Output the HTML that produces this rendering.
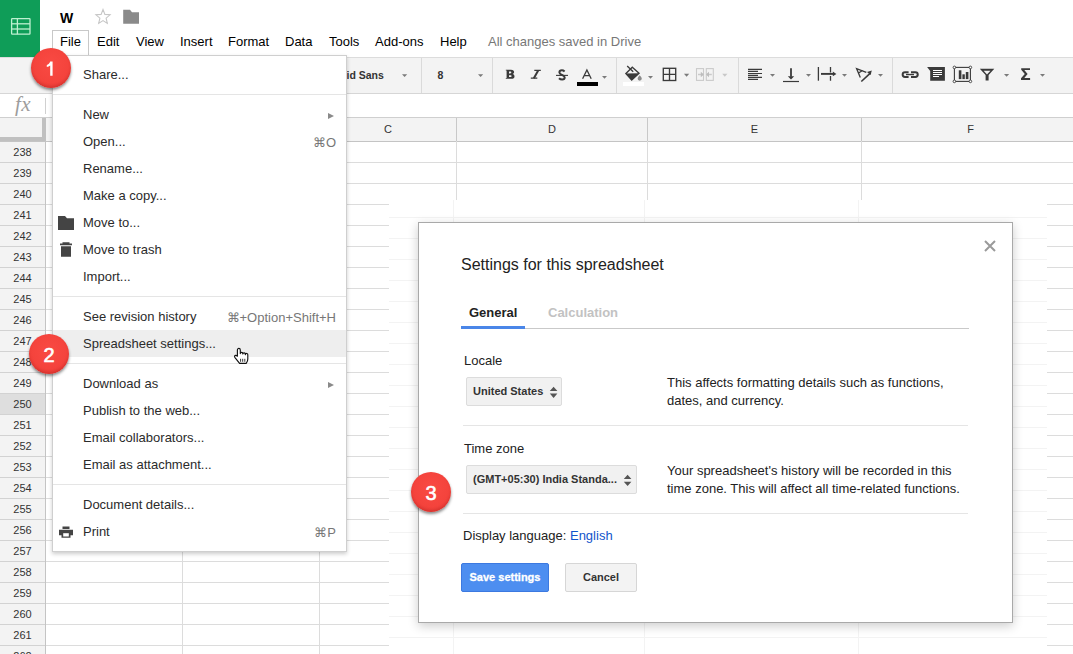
<!DOCTYPE html>
<html><head><meta charset="utf-8">
<style>
*{margin:0;padding:0;box-sizing:border-box}
html,body{width:1073px;height:654px;overflow:hidden;background:#fff;font-family:"Liberation Sans",sans-serif;color:#222}
.a{position:absolute}
#logo{left:0;top:0;width:40px;height:57px;background:#0f9d58}
#title{left:60px;top:10px;font-size:14px;font-weight:bold;color:#000}
.menu{top:34px;font-size:13px;color:#000;white-space:nowrap}
#saved{color:#777}
#filebtn{left:52px;top:30px;width:37px;height:27px;border:1px solid #c8c8c8;border-bottom:none;background:#fff}
#toolbar{left:0;top:57px;width:1073px;height:37px;background:#f3f3f3;border-top:1px solid #dcdcdc;border-bottom:1px solid #d6d6d6}
.tsep{top:0;width:1px;height:35px;background:#dadada}
.dd{width:0;height:0;border-left:3.5px solid transparent;border-right:3.5px solid transparent;border-top:4px solid #777}
#fbar{left:0;top:94px;width:1073px;height:24px;background:#fff}
#colhdr{left:0;top:117px;width:1073px;height:25px;background:#f3f3f3;border-top:1px solid #cfcfcf;border-bottom:1px solid #c4c4c4}
.ch{top:0;height:23px;font-size:11px;color:#333;text-align:center;line-height:23px;border-left:1px solid #c8c8c8}
#corner{left:0;top:118px;width:46px;height:23px;background:#f3f3f3;border-right:4px solid #c0c0c0;border-bottom:4px solid #c0c0c0}
.rh{position:absolute;left:0;width:45px;height:21px;background:#f3f3f3;border-bottom:1px solid #d2d2d2;font-size:11px;color:#333;text-align:center;line-height:21px}
.rh.sel{background:#dedede}
#rhborder{left:45px;top:141px;width:1px;height:513px;background:#c4c4c4}
.hl{position:absolute;left:46px;width:1027px;height:1px;background:#dcdcdc}
.vl{position:absolute;top:141px;width:1px;height:513px;background:#dcdcdc}
#ovl{left:389px;top:200px;width:658px;height:454px;background:#fff;overflow:hidden}
.fhl{position:absolute;left:0;width:658px;height:1px;background:#f3f3f3}
.fvl{position:absolute;top:0;width:1px;height:454px;background:#f3f3f3}
#fmenu{left:52px;top:55px;width:295px;height:497px;background:#fff;border:1px solid #cfcfcf;box-shadow:0 2px 4px rgba(0,0,0,0.2)}
.mi{position:absolute;left:30px;font-size:13px;color:#2b2b2b;line-height:20px;white-space:nowrap}
.msc{position:absolute;right:10px;margin-top:1px;font-size:13px;color:#777;line-height:20px;white-space:nowrap}
.marr{position:absolute;right:12px;width:0;height:0;border-top:3px solid transparent;border-bottom:3px solid transparent;border-left:6.5px solid #8a8a8a}
.msep{position:absolute;left:0;width:293px;height:1px;background:#e5e5e5}
#mhl{left:0;top:274px;width:293px;height:27px;background:#eeeeee}
.badge{width:40px;height:40px;border-radius:50%;background:radial-gradient(circle at 50% 40%,#f94a43 0%,#f4433c 60%,#dd3833 100%);color:#fff;font-size:20px;text-align:center;line-height:42px;box-shadow:0 2px 3px rgba(0,0,0,0.45),inset 0 -2px 3px rgba(120,0,0,0.18);-webkit-text-stroke:0.6px #fff}
#dlg{left:418px;top:222px;width:595px;height:401px;background:#fff;border:1px solid #a9a9a9;box-shadow:0 3px 10px rgba(0,0,0,0.2)}
#dlg .t{position:absolute;white-space:nowrap}
.sel-box{position:absolute;height:29px;background:#f1f1f1;border:1px solid #dcdcdc;border-radius:2px;font-size:11px;font-weight:bold;color:#333;line-height:27px;padding-left:6px}
.dsep{position:absolute;left:44px;width:505px;height:1px;background:#e5e5e5}
</style></head><body>
<div class="a" id="logo">
<svg width="40" height="57" style="position:absolute;left:0;top:0">
<g stroke="#bdf0d0" stroke-width="1.3" fill="none"><rect x="11.6" y="18.6" width="18.4" height="15.6" rx="0.6"/><line x1="11.6" y1="23.8" x2="30" y2="23.8"/><line x1="11.6" y1="29" x2="30" y2="29"/><line x1="17.4" y1="18.6" x2="17.4" y2="34.2"/></g></svg>
</div>
<div class="a" id="title">W</div>
<svg class="a" style="left:94px;top:8px" width="18" height="18" viewBox="0 0 18 18"><path d="M9 1.5 L10.9 6.4 L16.1 6.8 L12.1 10.2 L13.3 15.4 L9 12.6 L4.7 15.4 L5.9 10.2 L1.9 6.8 L7.1 6.4 Z" fill="none" stroke="#c6c6c6" stroke-width="1.1"/></svg>
<svg class="a" style="left:122px;top:9px" width="18" height="16" viewBox="0 0 18 16"><path d="M1.2 0.8 H8 L10 3.2 H17 V14.7 H1.2 Z" fill="#8a8a8a"/></svg>

<div class="a" id="filebtn"></div>
<div class="a menu" style="left:60px">File</div>
<div class="a menu" style="left:97px">Edit</div>
<div class="a menu" style="left:136px">View</div>
<div class="a menu" style="left:180px">Insert</div>
<div class="a menu" style="left:228px">Format</div>
<div class="a menu" style="left:285px">Data</div>
<div class="a menu" style="left:329px">Tools</div>
<div class="a menu" style="left:375px">Add-ons</div>
<div class="a menu" style="left:440px">Help</div>
<div class="a menu" id="saved" style="left:488px">All changes saved in Drive</div>

<div class="a" id="toolbar">
 <div class="a tsep" style="left:421px"></div>
 <div class="a tsep" style="left:492px"></div>
 <div class="a tsep" style="left:616px"></div>
 <div class="a tsep" style="left:738px"></div>
 <div class="a tsep" style="left:892px"></div>
</div>

<svg class="a" style="left:0;top:0" width="1073" height="94" viewBox="0 0 1073 94">
<g fill="#7a7a7a">
<path d="M402 74.2h5.2l-2.6 2.8z"/>
<path d="M478 74.2h5.2l-2.6 2.8z"/>
<path d="M602 76h5l-2.5 2.8z"/>
<path d="M648 76h5l-2.5 2.8z"/>
<path d="M684 73.8h5.2l-2.6 3z"/>
<path d="M770 74h5l-2.5 2.8z"/>
<path d="M806 74h5l-2.5 2.8z"/>
<path d="M842 74h5l-2.5 2.8z"/>
<path d="M878 74h5l-2.5 2.8z"/>
<path d="M1004 74h5.2l-2.6 2.8z"/>
<path d="M1040 74h5l-2.5 2.8z"/>
</g>
<path d="M722.2 73.8h5.2l-2.6 3z" fill="#c8c8c8"/>
<text x="346.5" y="79" font-family="Liberation Sans" font-weight="bold" font-size="10.5" fill="#333">id Sans</text>
<text x="437.5" y="79" font-family="Liberation Sans" font-weight="bold" font-size="10.5" fill="#333">8</text>
<path fill-rule="evenodd" fill="#3a3a3a" d="M505.8 69.8H511C513.3 69.8 514.1 70.9 514.1 72.1C514.1 73.2 513.4 73.8 512.6 74.1C513.7 74.4 514.5 75.2 514.5 76.4C514.5 77.9 513.5 78.8 511.2 78.8H505.8V78H506.6V70.6H505.8Z M509 71.6H510.3C511 71.6 511.3 72 511.3 72.5C511.3 73 511 73.4 510.3 73.4H509Z M509 75.2H510.5C511.2 75.2 511.6 75.6 511.6 76.1C511.6 76.7 511.2 77.1 510.5 77.1H509Z"/>
<g stroke="#3a3a3a" fill="none">
<path d="M534.3 70.4h6.5M530.8 78.2h6.5" stroke-width="1.3"/>
<path d="M538.2 70.4L533.8 78.2" stroke-width="2"/>
</g>
<path d="M564.6 71.4C563.7 70.6 562.7 70.3 561.9 70.3C560.3 70.3 559.4 71.2 559.4 72.4C559.4 75.1 564.7 74.6 564.7 77.5C564.7 78.8 563.7 79.5 562.2 79.5C561.1 79.5 559.9 79.1 559 78.2" fill="none" stroke="#3a3a3a" stroke-width="2"/>
<path d="M556 75.4h12" stroke="#3a3a3a" stroke-width="1.1"/>
<path d="M582.6 78.8L586.9 69.9L591.2 78.8M584.4 75.6h5" stroke="#3a3a3a" stroke-width="1.3" fill="none"/>
<rect x="577" y="82" width="21" height="4" fill="#000"/>
<!-- paint bucket -->
<path d="M632.3 67.3L639 73.2L631.7 79.9L625.9 73.5Z" fill="none" stroke="#3a3a3a" stroke-width="1.4"/>
<path d="M626 73.5L639 73.3L631.7 80Z" fill="#3a3a3a"/>
<path d="M627.2 66L633.2 71.8" stroke="#3a3a3a" stroke-width="1.3"/>
<path d="M639.7 75.2C640.9 76.6 641.8 77.6 641.8 78.6A2.1 2.1 0 0 1 637.6 78.6C637.6 77.6 638.5 76.6 639.7 75.2Z" fill="#8a8a8a"/>
<rect x="623" y="82" width="21" height="4" fill="#fff"/>
<!-- borders -->
<g stroke="#3a3a3a" stroke-width="1.35" fill="none"><rect x="663.3" y="68.3" width="12.4" height="12.2"/><path d="M669.5 68.3v12.2M663.3 74.4h12.4"/></g>
<!-- merge disabled -->
<g stroke="#cacaca" fill="none" stroke-width="1.1"><rect x="696.5" y="68.6" width="7" height="11.8"/><rect x="706.3" y="68.6" width="7" height="11.8"/>
<path d="M698 74.5h4.5M711.8 74.5h-4.5" stroke-width="1.4"/></g>
<path d="M700.8 71.8l3 2.7l-3 2.7zM709 71.8l-3 2.7l3 2.7z" fill="#bdbdbd"/>
<!-- align left -->
<g stroke="#3a3a3a" stroke-width="1.15"><path d="M748 69.4h14M748 71.4h10M748 73.5h14M748 75.4h10M748 77.4h14M748 79.4h10"/></g>
<!-- valign bottom -->
<path d="M791 68.2v8.5" stroke="#3a3a3a" stroke-width="1.8"/>
<path d="M787.8 76.2h6.4l-3.2 3.2z" fill="#3a3a3a"/>
<path d="M783 81.5h16" stroke="#3a3a3a" stroke-width="1.2"/>
<!-- wrap -->
<g stroke="#3a3a3a" fill="none"><path d="M818.4 67v13.7" stroke-width="1.3"/><path d="M830.5 67v5.5M830.5 76v4.7" stroke-width="1.3"/><path d="M821 73.9h12.5" stroke-width="1.9"/></g>
<path d="M832.8 71.5l3.6 2.4l-3.6 2.4z" fill="#3a3a3a"/>
<!-- rotate -->
<g stroke="#3a3a3a" fill="none" stroke-width="1.3"><path d="M866.3 72.3L856.6 68.6L860.3 77.4M858.5 73L862.6 70.5"/><path d="M861.3 81.5L870.6 72.8" stroke-width="1.7"/></g>
<path d="M867 72l4.8 -1.6l-1.2 4.6z" fill="#3a3a3a"/>
<!-- link -->
<g stroke="#3a3a3a" fill="none" stroke-width="2"><path d="M908.6 72.2H905a2.35 2.35 0 0 0 0 4.7H908.6"/><path d="M911 72.2H915.4a2.35 2.35 0 0 1 0 4.7H911"/><path d="M906 74.55h8" stroke-width="1.4"/></g>
<!-- comment -->
<path d="M927.1 67.1H944.9V80.7H930.2V71Z" fill="#3a3a3a"/>
<g stroke="#fff" stroke-width="1"><path d="M933 70.5h9M933 72.5h9M933 74.5h9M933 76.5h6"/></g>
<!-- chart -->
<rect x="954.4" y="67.4" width="16" height="14" fill="none" stroke="#3a3a3a" stroke-width="1.1"/>
<g fill="#fff" stroke="#3a3a3a" stroke-width="0.9"><circle cx="954.4" cy="67.4" r="1.3"/><circle cx="970.4" cy="67.4" r="1.3"/><circle cx="954.4" cy="81.4" r="1.3"/><circle cx="970.4" cy="81.4" r="1.3"/></g>
<g fill="#3a3a3a"><rect x="958.8" y="70.3" width="2.6" height="8.8"/><rect x="962.4" y="74.3" width="2.4" height="4.8"/><rect x="965.8" y="72" width="2.6" height="7.1"/></g>
<!-- filter -->
<path d="M979.8 68.7H994.3L988.6 75V80.6H985.6V75Z" fill="#3a3a3a"/>
<path d="M983.6 70.7H990.5L987 74.4Z" fill="#f3f3f3"/>
<!-- sigma -->
<path d="M1021.2 68.2H1030V70H1024.3L1027.6 74L1024.3 78.1H1030.1V79.9H1021V78.3L1024.8 74L1021.2 69.8Z" fill="#3a3a3a"/>
</svg>

<div class="a" id="fbar">
 <div class="a" style="left:15px;top:-2px;font-family:'Liberation Serif',serif;font-style:italic;font-size:21px;letter-spacing:0.5px;color:#9d9d9d">fx</div>
 <div class="a" style="left:45px;top:4px;width:1px;height:16px;background:#d0d0d0"></div>
</div>

<div class="a" id="colhdr">
 <div class="a ch" style="left:319px;width:137px">C</div>
 <div class="a ch" style="left:456px;width:191px">D</div>
 <div class="a ch" style="left:647px;width:214px">E</div>
 <div class="a ch" style="left:861px;width:218px">F</div>
 <div class="a ch" style="left:182px;width:137px"></div>
</div>
<div class="a" id="corner"></div>

<div class="hl" style="top:162px"></div>
<div class="hl" style="top:183px"></div>
<div class="hl" style="top:204px"></div>
<div class="hl" style="top:225px"></div>
<div class="hl" style="top:246px"></div>
<div class="hl" style="top:267px"></div>
<div class="hl" style="top:288px"></div>
<div class="hl" style="top:309px"></div>
<div class="hl" style="top:330px"></div>
<div class="hl" style="top:351px"></div>
<div class="hl" style="top:372px"></div>
<div class="hl" style="top:393px"></div>
<div class="hl" style="top:414px"></div>
<div class="hl" style="top:435px"></div>
<div class="hl" style="top:456px"></div>
<div class="hl" style="top:477px"></div>
<div class="hl" style="top:498px"></div>
<div class="hl" style="top:519px"></div>
<div class="hl" style="top:540px"></div>
<div class="hl" style="top:561px"></div>
<div class="hl" style="top:582px"></div>
<div class="hl" style="top:603px"></div>
<div class="hl" style="top:624px"></div>
<div class="hl" style="top:645px"></div>
<div class="hl" style="top:666px"></div>
<div class="vl" style="left:182px"></div>
<div class="vl" style="left:319px"></div>
<div class="vl" style="left:456px"></div>
<div class="vl" style="left:647px"></div>
<div class="vl" style="left:861px"></div>
<div class="rh" style="top:142px">238</div>
<div class="rh" style="top:163px">239</div>
<div class="rh" style="top:184px">240</div>
<div class="rh" style="top:205px">241</div>
<div class="rh" style="top:226px">242</div>
<div class="rh" style="top:247px">243</div>
<div class="rh" style="top:268px">244</div>
<div class="rh" style="top:289px">245</div>
<div class="rh" style="top:310px">246</div>
<div class="rh" style="top:331px">247</div>
<div class="rh" style="top:352px">248</div>
<div class="rh" style="top:373px">249</div>
<div class="rh sel" style="top:394px">250</div>
<div class="rh" style="top:415px">251</div>
<div class="rh" style="top:436px">252</div>
<div class="rh" style="top:457px">253</div>
<div class="rh" style="top:478px">254</div>
<div class="rh" style="top:499px">255</div>
<div class="rh" style="top:520px">256</div>
<div class="rh" style="top:541px">257</div>
<div class="rh" style="top:562px">258</div>
<div class="rh" style="top:583px">259</div>
<div class="rh" style="top:604px">260</div>
<div class="rh" style="top:625px">261</div>
<div class="rh" style="top:646px">262</div>
<div class="a" id="rhborder"></div>

<div class="a" id="ovl">
<div class="fhl" style="top:17px"></div>
<div class="fhl" style="top:38px"></div>
<div class="fhl" style="top:59px"></div>
<div class="fhl" style="top:80px"></div>
<div class="fhl" style="top:101px"></div>
<div class="fhl" style="top:122px"></div>
<div class="fhl" style="top:143px"></div>
<div class="fhl" style="top:164px"></div>
<div class="fhl" style="top:185px"></div>
<div class="fhl" style="top:206px"></div>
<div class="fhl" style="top:227px"></div>
<div class="fhl" style="top:248px"></div>
<div class="fhl" style="top:269px"></div>
<div class="fhl" style="top:290px"></div>
<div class="fhl" style="top:311px"></div>
<div class="fhl" style="top:332px"></div>
<div class="fhl" style="top:353px"></div>
<div class="fhl" style="top:374px"></div>
<div class="fhl" style="top:395px"></div>
<div class="fhl" style="top:416px"></div>
<div class="fhl" style="top:437px"></div>
<div class="fhl" style="top:458px"></div>
<div class="fvl" style="left:64px"></div>
<div class="fvl" style="left:255px"></div>
<div class="fvl" style="left:469px"></div>
</div>

<div class="a" id="fmenu">
<div class="a" id="mhl"></div>
<div class="msep" style="top:38px"></div>
<div class="msep" style="top:240px"></div>
<div class="msep" style="top:307px"></div>
<div class="msep" style="top:428px"></div>
<div class="mi" style="top:9px">Share...</div>
<div class="mi" style="top:49px">New</div>
<div class="marr" style="top:57px"></div>
<div class="mi" style="top:76px">Open...</div>
<div class="msc" style="top:76px">⌘O</div>
<div class="mi" style="top:103px">Rename...</div>
<div class="mi" style="top:130px">Make a copy...</div>
<div class="mi" style="top:157px">Move to...</div>
<div class="mi" style="top:184px">Move to trash</div>
<div class="mi" style="top:211px">Import...</div>
<div class="mi" style="top:251px">See revision history</div>
<div class="msc" style="top:251px">⌘+Option+Shift+H</div>
<div class="mi" style="top:278px">Spreadsheet settings...</div>
<div class="mi" style="top:318px">Download as</div>
<div class="marr" style="top:326px"></div>
<div class="mi" style="top:345px">Publish to the web...</div>
<div class="mi" style="top:372px">Email collaborators...</div>
<div class="mi" style="top:399px">Email as attachment...</div>
<div class="mi" style="top:439px">Document details...</div>
<div class="mi" style="top:466px">Print</div>
<div class="msc" style="top:466px">⌘P</div>
</div>

<div class="a" id="dlg">
 <svg class="a" style="left:565px;top:17px" width="12" height="12" viewBox="0 0 12 12"><path d="M1 1L11 11M11 1L1 11" stroke="#9a9a9a" stroke-width="2"/></svg>
 <div class="t" style="left:42px;top:33px;font-size:16px;color:#222">Settings for this spreadsheet</div>
 <div class="t" style="left:50px;top:82px;font-size:13px;font-weight:bold;color:#222">General</div>
 <div class="t" style="left:129px;top:82px;font-size:13px;font-weight:bold;color:#c2c2c2">Calculation</div>
 <div class="a" style="left:42px;top:105px;width:508px;height:1px;background:#c9c9c9"></div>
 <div class="a" style="left:42px;top:103px;width:64px;height:3px;background:#4a86e8"></div>
 <div class="t" style="left:45px;top:130px;font-size:13px;color:#222">Locale</div>
 <div class="sel-box" style="left:47px;top:154px;width:96px">United States</div>
 <div class="t" style="left:248px;top:151px;font-size:13px;color:#222;line-height:18px">This affects formatting details such as functions,<br>dates, and currency.</div>

 <div class="dsep" style="top:202px"></div>
 <div class="t" style="left:45px;top:218px;font-size:13px;color:#222">Time zone</div>
 <div class="sel-box" style="left:47px;top:242px;width:171px">(GMT+05:30) India Standa...</div>
 <div class="t" style="left:248px;top:239px;font-size:13px;color:#222;line-height:18px">Your spreadsheet's history will be recorded in this<br>time zone. This will affect all time-related functions.</div>
 <div class="dsep" style="top:290px"></div>
 <div class="t" style="left:44px;top:305px;font-size:13px;color:#222">Display language: <span style="color:#1155cc">English</span></div>
 <div class="a" style="left:42px;top:340px;width:88px;height:29px;background:#4d8ef0;border:1px solid #3c79e0;border-radius:2px;color:#fff;font-size:11px;font-weight:bold;text-align:center;line-height:27px;-webkit-text-stroke:0.3px #fff">Save settings</div>
 <div class="a" style="left:146px;top:340px;width:72px;height:29px;background:#f3f3f3;border:1px solid #d6d6d6;border-radius:2px;color:#333;font-size:11px;font-weight:bold;text-align:center;line-height:27px">Cancel</div>
 <svg class="a" style="left:0;top:0" width="595" height="401" viewBox="418 222 595 401">
 <path d="M548.8 390.1h7.6l-3.8-4.3z M548.8 392.6h7.6l-3.8 4.3z" fill="#555"/>
 <path d="M622.8 478.1h7.6l-3.8-4.3z M622.8 480.8h7.6l-3.8 4.3z" fill="#555"/>
 </svg>
</div>


<svg class="a" style="left:0;top:0" width="360" height="654" viewBox="0 0 360 654">
<path d="M58 216H65L67 218.2H74V230H58Z" fill="#444"/>
<path d="M62.5 242.3H69.5V243.5H72V245.2H60V243.5H62.5Z M61 246.2H71V256.7H61Z" fill="#444"/>
<path d="M62.5 526.5H69.5V529H62.5Z M59 529.8H73V535.2H70.5V537.7H61.5V535.2H59Z" fill="#444"/>
<rect x="63.2" y="533.2" width="5.6" height="3.3" fill="#fff"/>
<!-- hand cursor -->
<path d="M237.4 356.2V349.9a1.45 1.45 0 0 1 2.9 0V353.6a1.25 1.25 0 0 1 2.5 0.1V354a1.25 1.25 0 0 1 2.5 0.2V354.6a1.25 1.25 0 0 1 2.5 0.2V359c0 1.8-0.8 3.4-1.6 4.4H239.6L235 357.6c-0.9-1.2-0.3-2.4 0.9-2.2c0.6 0.1 1 0.4 1.5 0.8Z" fill="#fff" stroke="#111" stroke-width="1.15" stroke-linejoin="round"/>
<path d="M240.6 358.8v3M242.7 358.8v3M244.8 358.8v3" stroke="#111" stroke-width="0.85"/>
</svg>
<div class="a badge" style="left:31px;top:48px"><svg style="position:absolute;left:0;top:0" width="40" height="40"><path d="M19.2 13.6H21.6V27.8H19.2V17.6C18.3 18.4 17.1 18.8 15.8 19V17C17.4 16.6 18.6 15.6 19.2 13.6Z" fill="#fff"/></svg></div>
<div class="a badge" style="left:29px;top:334px">2</div>
<div class="a badge" style="left:411px;top:472px">3</div>
</body></html>
